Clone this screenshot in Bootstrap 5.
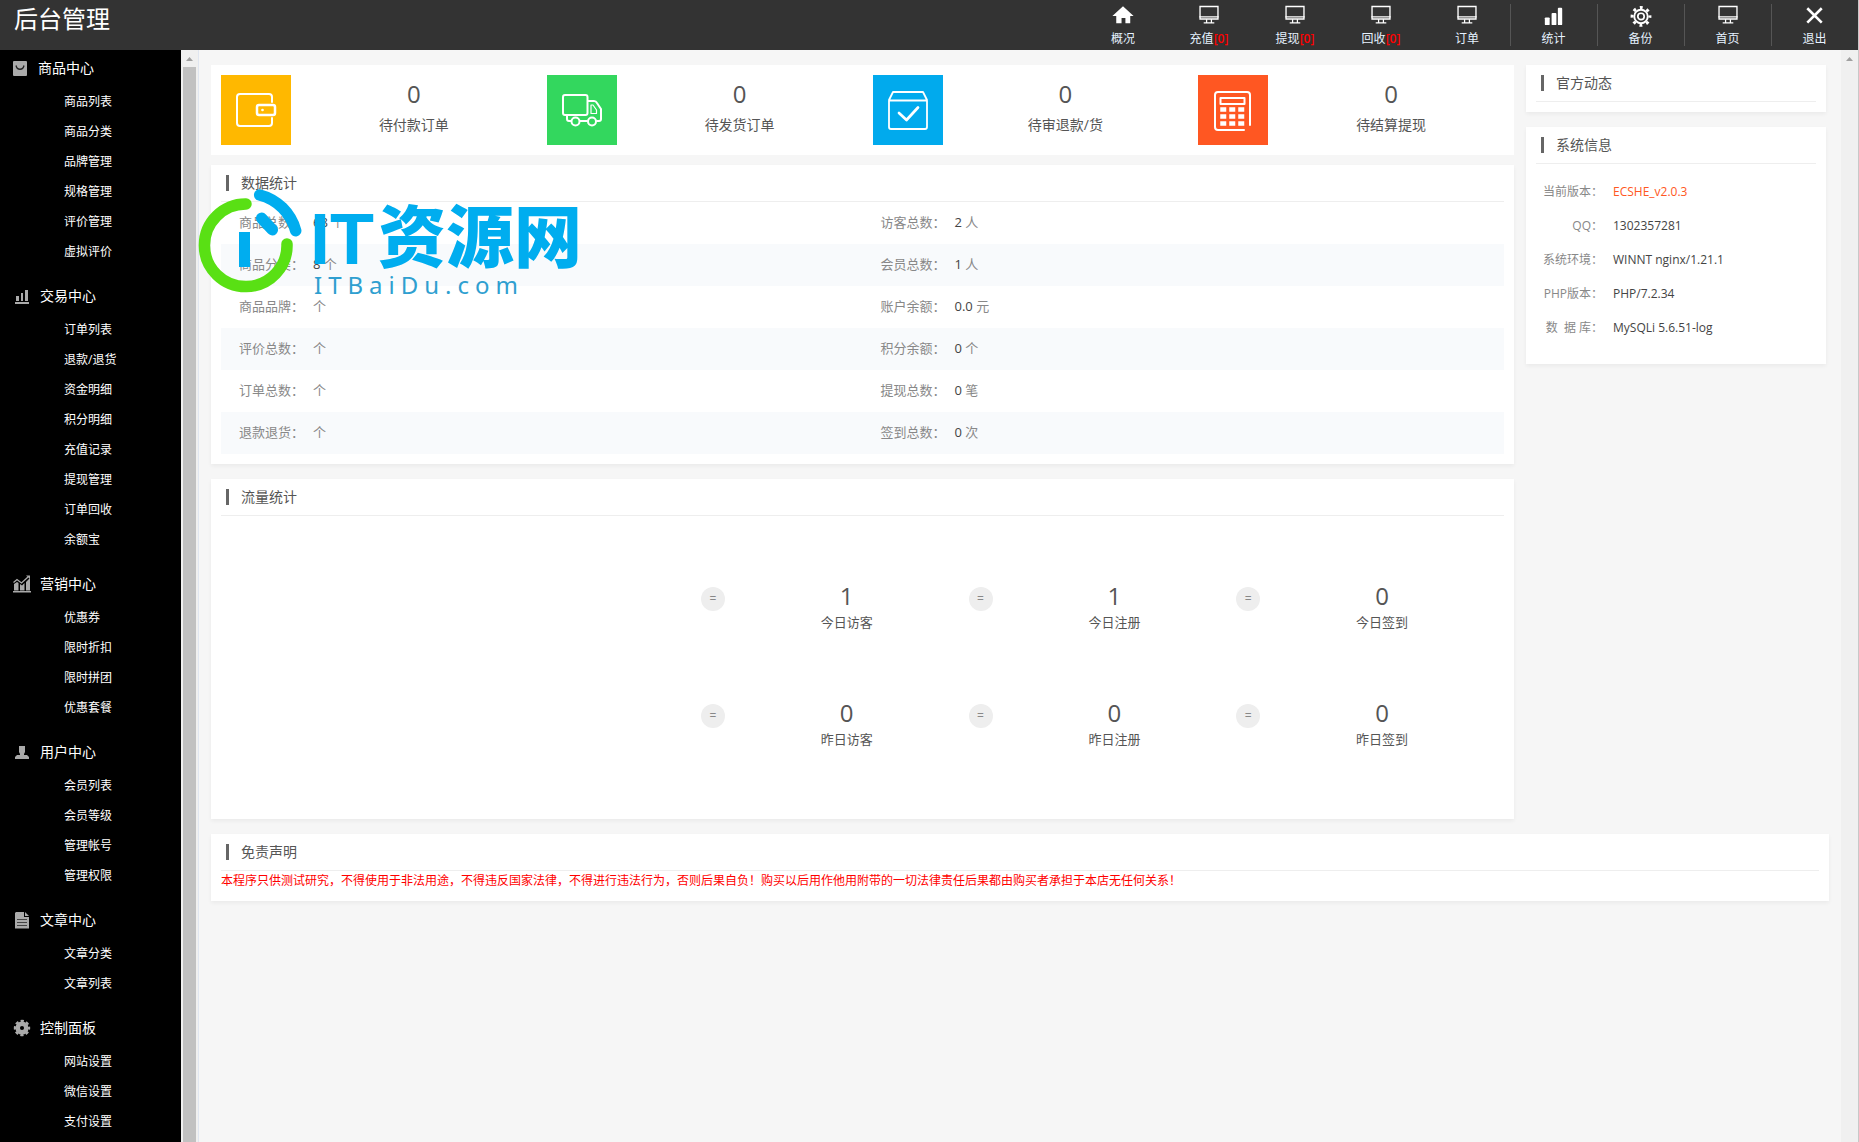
<!DOCTYPE html>
<html lang="zh-CN">
<head>
<meta charset="utf-8">
<meta name="viewport" content="width=device-width, initial-scale=1">
<title>后台管理</title>
<link href="https://cdn.jsdelivr.net/npm/bootstrap@5.3.0/dist/css/bootstrap.min.css" rel="stylesheet">
<style>
body{font-family:"Open Sans","Noto Sans CJK SC",sans-serif;font-size:12px;line-height:20px;color:#444;background:#f6f6f6;border-right:1px solid #c8c8c8}
a{text-decoration:none}
.topbar{height:50px;background:#333}
.brand-title{font-size:24px;line-height:38px;font-weight:400;color:#fff;padding-left:14px}
.top-link{width:86px;color:#e6f2ff;line-height:22px;padding-top:1px}
.top-link.ruled{width:87px;position:relative}
.top-link.ruled::before{content:"";position:absolute;left:0;top:4px;height:42px;width:1px;background:#555}
.top-link svg{display:block;height:28px;width:24px}
.top-link b{color:#f00;font-weight:600}
.side{width:181px;background:#000;overflow:hidden}
.side h2{font-size:14px;font-weight:400;line-height:36px;height:36px;margin:0;color:#fff;padding-left:13px;display:flex;align-items:center;gap:9px}
.side h2:first-child{gap:7px}
.side h2 svg{width:18px;height:18px;flex:none}
.side ul{margin:0 0 11px;padding:1px 0 0;list-style:none}
.side li a{display:block;line-height:30px;padding-left:64px;color:#fff}
.scroll-rail{width:17px;background:#f0f0f0;flex:none}
.scroll-rail svg{display:block;width:17px;height:17px}
.thumb{background:#c1c1c1;margin:0 2px;flex:1}
.content{border-left:1px solid #e0e6f0;padding:15px 12px 0;overflow:hidden}
.main-cols{gap:12px;padding-right:3px}
.aside-col{width:300px;flex:none}
.panel{background:#fff;padding:0 10px 10px;margin-bottom:15px;box-shadow:0 2px 4px rgba(0,0,0,.05)}
.panel h3{font-size:14px;font-weight:400;line-height:36px;height:37px;margin:0;border-bottom:1px solid #eee;padding-left:5px;display:flex;align-items:center;gap:12px;color:#555}
.panel h3::before{content:"";width:3px;height:16px;background:#666}
.kpis{background:#fff;padding:10px 0;margin-bottom:10px}
.kpi{flex:1 1 0;padding-left:10px}
.tile{width:70px;height:70px;flex:none}
.tile svg{display:block;width:70px;height:70px;fill:none;stroke:#fff;stroke-width:2;stroke-linecap:round;stroke-linejoin:round}
.t-amber{background:#ffb800}.t-green{background:#33d75e}.t-blue{background:#01aaed}.t-red{background:#ff5722}
.big-num{font-size:24px;line-height:30px;color:#555}
.kpi .cap{font-size:14px;line-height:32px;color:#555}
.figures{width:100%;font-size:13px;color:#888;table-layout:fixed}
.figures td{height:42px;padding:0 0 2px 18px;line-height:20px}
.figures tr:nth-child(even){background:#f8fafc}
.figures .k{display:inline-block;width:74px}
.figures b{font-weight:400;color:#444}
.flow{padding:65px 0 31px}
.flow-row{height:80px;margin-bottom:37px}
.flow-gap{width:37.4%;flex:none}
.flow-cell{flex:1 1 0}
.eq{width:24px;height:24px;line-height:24px;border-radius:50%;background:#eee;color:#888;margin-top:6px;flex:none}
.flow-cell .cap{font-size:13px;line-height:22px;color:#555}
.info{margin:0;padding:11px 0 9px}
.info div{display:flex;gap:10px;line-height:34px}
.info dt{width:67px;text-align:right;font-weight:400;color:#888;white-space:pre}
.info dd{margin:0;color:#444}
.info .ver{color:#ff5722}
.warn-text{color:#f00;line-height:20px;margin:0}
.watermark{position:absolute;left:198px;top:166px;width:440px;height:152px;pointer-events:none}
.watermark svg{display:block;width:440px;height:152px;overflow:visible}
</style>
<script src="https://cdn.jsdelivr.net/npm/bootstrap@5.3.0/dist/js/bootstrap.bundle.min.js"></script>
</head>
<body class="vh-100 d-flex flex-column overflow-hidden position-relative">
<svg class="d-none">
<symbol id="monitor" viewBox="0 0 24 28"><path d="M2.700 5.700h18.600v13H2.700z" fill="none" stroke="#fff" stroke-width="1.400"/><path d="M2 16.500h20M9.500 19v3.500M14.500 19v3.500M6.500 22.800h11" fill="none" stroke="#fff" stroke-width="1.300"/></symbol>
</svg>
<header class="topbar d-flex justify-content-between flex-shrink-0">
<h1 class="brand-title m-0">后台管理</h1>
<nav class="d-flex text-center">
<a class="top-link d-flex flex-column align-items-center" href="#"><svg viewBox="0 0 24 28"><path d="M12 5.500 23 15.500h-3.500V23H14.500v-5.500h-4V23H5v-7.500H1z" fill="#fff"/></svg><span>概况</span></a>
<a class="top-link d-flex flex-column align-items-center" href="#"><svg><use href="#monitor"/></svg><span>充值<b>[0]</b></span></a>
<a class="top-link d-flex flex-column align-items-center" href="#"><svg><use href="#monitor"/></svg><span>提现<b>[0]</b></span></a>
<a class="top-link d-flex flex-column align-items-center" href="#"><svg><use href="#monitor"/></svg><span>回收<b>[0]</b></span></a>
<a class="top-link d-flex flex-column align-items-center" href="#"><svg><use href="#monitor"/></svg><span>订单</span></a>
<a class="top-link ruled d-flex flex-column align-items-center" href="#"><svg viewBox="0 0 24 28" fill="#fff"><rect x="2.500" y="17" width="5" height="8" rx="1"/><rect x="9.500" y="12.500" width="5" height="12.500" rx="1"/><rect x="16" y="7" width="4.500" height="18" rx="1"/></svg><span>统计</span></a>
<a class="top-link ruled d-flex flex-column align-items-center" href="#"><svg viewBox="0 0 24 28" fill="none" stroke="#fff"><circle cx="12" cy="16" r="7" stroke-width="2"/><circle cx="12" cy="16" r="3.300" stroke-width="1.800"/><circle cx="12" cy="16" r="9.300" stroke-width="3" stroke-dasharray="3 4.304" stroke-dashoffset="1.500"/></svg><span>备份</span></a>
<a class="top-link ruled d-flex flex-column align-items-center" href="#"><svg><use href="#monitor"/></svg><span>首页</span></a>
<a class="top-link ruled d-flex flex-column align-items-center" href="#"><svg viewBox="0 0 24 28"><path d="M4 7.500 19 22.500M19 7.500 4 22.500" stroke="#fff" stroke-width="2.700"/></svg><span>退出</span></a>
</nav>
</header>
<div class="d-flex flex-grow-1 overflow-hidden">
<nav class="side flex-shrink-0">
<h2><svg viewBox="0 0 18 18"><rect y="2" width="14" height="15" rx="1" fill="#aaa"/><path d="M3 6.500c1 5 7 5 8 0" fill="none" stroke="#222" stroke-width="1.300"/></svg>商品中心</h2>
<ul><li><a href="#">商品列表</a></li><li><a href="#">商品分类</a></li><li><a href="#">品牌管理</a></li><li><a href="#">规格管理</a></li><li><a href="#">评价管理</a></li><li><a href="#">虚拟评价</a></li></ul>
<h2><svg viewBox="0 0 18 18" fill="#aaa"><path d="M2 15h14v2H2zM3 9h3v5H3zM8 6h2v8H8zM12 3h3v11h-3z"/></svg>交易中心</h2>
<ul><li><a href="#">订单列表</a></li><li><a href="#">退款/退货</a></li><li><a href="#">资金明细</a></li><li><a href="#">积分明细</a></li><li><a href="#">充值记录</a></li><li><a href="#">提现管理</a></li><li><a href="#">订单回收</a></li><li><a href="#">余额宝</a></li></ul>
<h2><svg viewBox="0 0 18 18" fill="#aaa"><path d="M0 16h18v1.500H0zM1 9l3-2 1.500 1v7.500H1zM7 9l2 1.500L11.500 8v7.500H7zM13 7l4-4v12.500h-4z"/><path d="m.5 7.500 3.500-3 4.500 3.500L15 2" stroke="#aaa" stroke-width="1.300" fill="none"/><path d="M13 .500h4V4z"/></svg>营销中心</h2>
<ul><li><a href="#">优惠券</a></li><li><a href="#">限时折扣</a></li><li><a href="#">限时拼团</a></li><li><a href="#">优惠套餐</a></li></ul>
<h2><svg viewBox="0 0 18 18" fill="#aaa"><path d="M6 3h6v6l-1 2v1h3l2 2v2H2v-2l2-2h3v-1L6 9z"/></svg>用户中心</h2>
<ul><li><a href="#">会员列表</a></li><li><a href="#">会员等级</a></li><li><a href="#">管理帐号</a></li><li><a href="#">管理权限</a></li></ul>
<h2><svg viewBox="0 0 18 18"><path d="M3 1h8v5h5v11.500H2V2z" fill="#aaa"/><path d="m12 1 4 4h-4z" fill="#aaa"/><path d="M4 8.500h10M4 11.500h10M4 14.500h10" stroke="#444"/></svg>文章中心</h2>
<ul><li><a href="#">文章分类</a></li><li><a href="#">文章列表</a></li></ul>
<h2><svg viewBox="0 0 18 18" fill="none" stroke="#aaa"><circle cx="9" cy="9" r="4.300" stroke-width="4.500"/><circle cx="9" cy="9" r="7" stroke-width="2.400" stroke-dasharray="3.200 2.298" stroke-dashoffset="1.600"/></svg>控制面板</h2>
<ul><li><a href="#">网站设置</a></li><li><a href="#">微信设置</a></li><li><a href="#">支付设置</a></li></ul>
</nav>
<div class="scroll-rail d-flex flex-column"><svg viewBox="0 0 17 17"><path d="M5 11h7L8.500 7z" fill="#a0a0a0"/></svg><div class="thumb"></div></div>
<main class="content flex-grow-1">
<div class="main-cols d-flex align-items-start">
<div class="flex-grow-1">
<section class="kpis d-flex">
<div class="kpi d-flex"><div class="tile t-amber"><svg viewBox="0 0 70 70"><path d="M51 27v-5q0-3-3-3H19q-3 0-3 3v26q0 3 3 3h29q3 0 3-3v-5"/><rect x="36" y="30" width="18" height="10" rx="2" stroke-width="2.500"/><circle cx="41.500" cy="35" r=".6" stroke-width="1.500"/></svg></div><div class="flex-grow-1 text-center pt-1"><div class="big-num">0</div><div class="cap">待付款订单</div></div></div>
<div class="kpi d-flex"><div class="tile t-green"><svg viewBox="0 0 70 70"><rect x="16" y="20" width="24.500" height="20" rx="2"/><path d="M41 26h6q2 0 3 2l4 6v10q0 2-2 2h-2M40 46h-7M24 46h-2q-2 0-2-2v-3.500"/><path d="M44 30h2l3.500 5v3.500H44z" stroke-width="1.200"/><circle cx="28.500" cy="46.500" r="4"/><circle cx="45" cy="46.500" r="4"/></svg></div><div class="flex-grow-1 text-center pt-1"><div class="big-num">0</div><div class="cap">待发货订单</div></div></div>
<div class="kpi d-flex"><div class="tile t-blue"><svg viewBox="0 0 70 70"><path d="M16 25.500h38V52q0 2-2 2H18q-2 0-2-2zM16 25l4-8h30l4 8" stroke-width="1.800"/><path d="m26 38 7.500 7L45 32.500" stroke-width="2.700"/></svg></div><div class="flex-grow-1 text-center pt-1"><div class="big-num">0</div><div class="cap">待审退款/货</div></div></div>
<div class="kpi d-flex"><div class="tile t-red"><svg viewBox="0 0 70 70"><path d="M46 55H20q-3 0-3-3V20q0-3 3-3h29q3 0 3 3v30"/><rect x="22.500" y="23" width="24" height="6"/><path d="M24.500 34.500h1.500M33.500 34.500h1.500M42.500 34.500H44M24.500 41.500h1.500M33.500 41.500h1.500M42.500 41.500H44M24.500 48.500h1.500M33.500 48.500h1.500M42.500 48.500H44" stroke-width="4.500" stroke-linecap="square"/></svg></div><div class="flex-grow-1 text-center pt-1"><div class="big-num">0</div><div class="cap">待结算提现</div></div></div>
</section>
<section class="panel">
<h3>数据统计</h3>
<table class="figures"><tbody>
<tr><td><span class="k">商品总数：</span><b>68</b> 个</td><td><span class="k">访客总数：</span><b>2</b> 人</td></tr>
<tr><td><span class="k">商品分类：</span><b>8</b> 个</td><td><span class="k">会员总数：</span><b>1</b> 人</td></tr>
<tr><td><span class="k">商品品牌：</span>个</td><td><span class="k">账户余额：</span><b>0.0</b> 元</td></tr>
<tr><td><span class="k">评价总数：</span>个</td><td><span class="k">积分余额：</span><b>0</b> 个</td></tr>
<tr><td><span class="k">订单总数：</span>个</td><td><span class="k">提现总数：</span><b>0</b> 笔</td></tr>
<tr><td><span class="k">退款退货：</span>个</td><td><span class="k">签到总数：</span><b>0</b> 次</td></tr>
</tbody></table>
</section>
<section class="panel">
<h3>流量统计</h3>
<div class="flow text-center">
<div class="flow-row d-flex"><div class="flow-gap"></div>
<div class="flow-cell d-flex"><div class="eq">=</div><div class="flex-grow-1"><div class="big-num">1</div><div class="cap">今日访客</div></div></div>
<div class="flow-cell d-flex"><div class="eq">=</div><div class="flex-grow-1"><div class="big-num">1</div><div class="cap">今日注册</div></div></div>
<div class="flow-cell d-flex"><div class="eq">=</div><div class="flex-grow-1"><div class="big-num">0</div><div class="cap">今日签到</div></div></div>
</div>
<div class="flow-row d-flex mb-0"><div class="flow-gap"></div>
<div class="flow-cell d-flex"><div class="eq">=</div><div class="flex-grow-1"><div class="big-num">0</div><div class="cap">昨日访客</div></div></div>
<div class="flow-cell d-flex"><div class="eq">=</div><div class="flex-grow-1"><div class="big-num">0</div><div class="cap">昨日注册</div></div></div>
<div class="flow-cell d-flex"><div class="eq">=</div><div class="flex-grow-1"><div class="big-num">0</div><div class="cap">昨日签到</div></div></div>
</div>
</div>
</section>
</div>
<aside class="aside-col">
<section class="panel"><h3>官方动态</h3></section>
<section class="panel"><h3>系统信息</h3>
<dl class="info">
<div><dt>当前版本：</dt><dd class="ver">ECSHE_v2.0.3</dd></div>
<div><dt>QQ：</dt><dd>1302357281</dd></div>
<div><dt>系统环境：</dt><dd>WINNT nginx/1.21.1</dd></div>
<div><dt>PHP版本：</dt><dd>PHP/7.2.34</dd></div>
<div><dt>数&nbsp; 据 库：</dt><dd>MySQLi 5.6.51-log</dd></div>
</dl></section>
</aside>
</div>
<section class="panel"><h3>免责声明</h3>
<p class="warn-text">本程序只供测试研究，不得使用于非法用途，不得违反国家法律，不得进行违法行为，否则后果自负！购买以后用作他用附带的一切法律责任后果都由购买者承担于本店无任何关系！</p></section>
</main>
<div class="scroll-rail"><svg viewBox="0 0 17 17"><path d="M5 11h7L8.500 7z" fill="#a0a0a0"/></svg></div>
</div>
<div class="watermark">
<svg viewBox="198 166 440 152" fill="none" stroke-width="11.500" stroke-linecap="round">
<path d="M246 204a41.300 41.300 0 1 0 41 40" stroke="#59e014"/>
<path d="M259.700 195A50 50 0 0 1 295.700 230.700" stroke="#00adef"/>
<path d="m261.700 218.300 10.600 11.400" stroke="#00adef"/>
<path d="M239 232h11v35h-11z" fill="#00adef"/>
<text x="310" y="264" fill="#00adef" font-family="Liberation Sans, sans-serif" font-weight="700" font-size="72">IT</text>
<text x="378" y="262" fill="#00adef" font-family="Noto Sans CJK SC, sans-serif" font-weight="900" font-size="68">资源网</text>
<text x="314" y="294" fill="#2f9fd0" font-family="Noto Sans, sans-serif" font-size="24" letter-spacing="6">ITBaiDu.com</text>
</svg>
</div>
</body>
</html>
